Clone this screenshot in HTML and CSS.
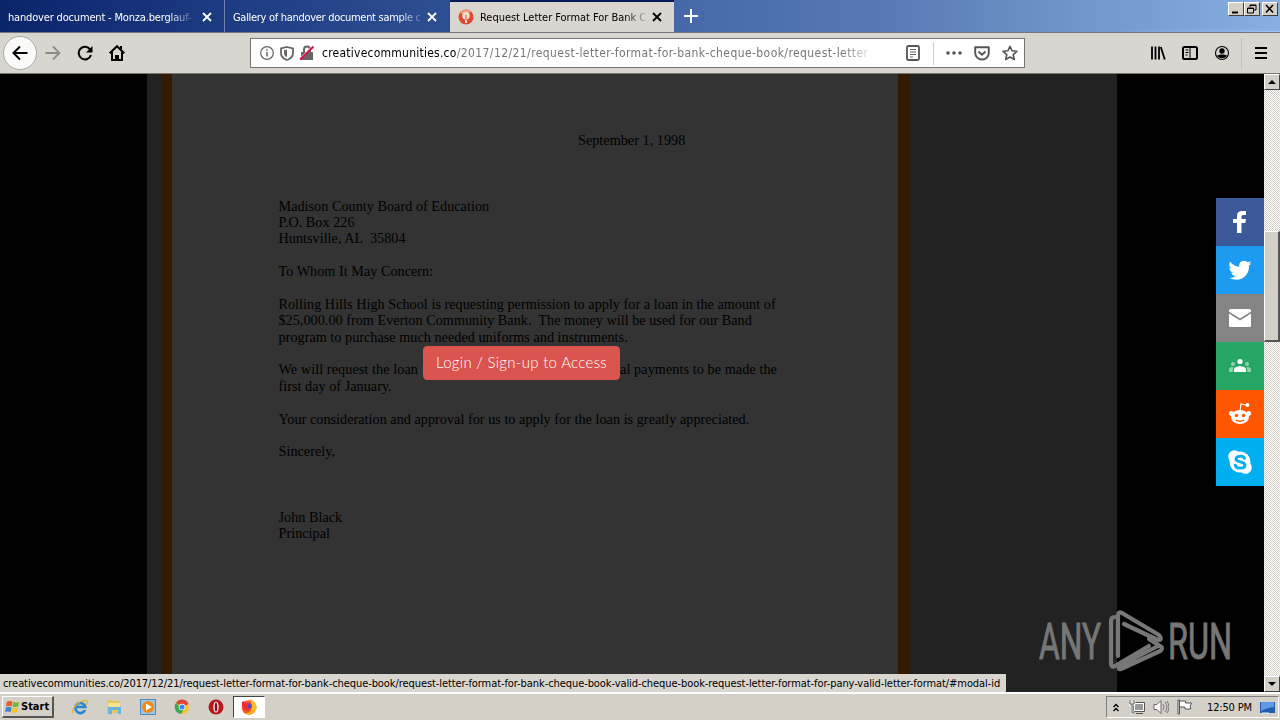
FILE: index.html
```html
<!DOCTYPE html>
<html lang="en">
<head>
<meta charset="utf-8">
<title>Request Letter Format For Bank Cheque Book</title>
<link rel="stylesheet" href="styles.css">
</head>
<body>
<header class="tabs">
  <div class="tab t1"><span class="label">handover document - Monza.berglauf-</span><svg class="x" viewBox="0 0 10 10"><path d="M1 1l8 8M9 1L1 9"/></svg></div>
  <div class="tab t2"><span class="label">Gallery of handover document sample c</span><svg class="x" viewBox="0 0 10 10"><path d="M1 1l8 8M9 1L1 9"/></svg></div>
  <div class="tab active"><svg class="favicon" viewBox="0 0 16 16"><circle cx="8" cy="8" r="7.500" fill="#de4a2c"/><path d="M2 4a7 7 0 0 1 11-1L8 6z" fill="#f3a078"/><path d="M8 3a4 4 0 0 1 3 6.500l-2 1V14H7v-3.500l-2-1A4 4 0 0 1 8 3z" fill="#f5dfd6"/><path d="M8 6v5" stroke="#de4a2c"/></svg><span class="label">Request Letter Format For Bank C</span><svg class="x" viewBox="0 0 10 10"><path d="M1 1l8 8M9 1L1 9"/></svg></div>
  <svg class="plus" viewBox="0 0 14 14"><path d="M7 0v14M0 7h14"/></svg>
  <div class="window-buttons">
    <span class="wb"><svg viewBox="0 0 12 10"><path d="M2 8.500h6" stroke-width="2"/></svg></span>
    <span class="wb"><svg viewBox="0 0 12 10"><path d="M4 3V1h6v5H8M4 1.500h6M1.500 4h6v5h-6zM1.500 4.500h6"/></svg></span>
    <span class="wb last"><svg viewBox="0 0 12 10"><path d="M2 1l7 7.500M9 1L2 8.500" stroke-width="1.600"/></svg></span>
  </div>
</header>
<nav class="toolbar">
  <div class="nav-icons">
    <span class="back"><svg viewBox="0 0 16 16"><path d="M15.500 8H1.500M8 1.500L1.500 8 8 14.500" fill="none" stroke="#000" stroke-width="2"/></svg></span>
    <svg class="i16 fwd" viewBox="0 0 16 16"><path d="M.5 8h14M8 1.500L14.500 8 8 14.500" fill="none" stroke="#8d8c88" stroke-width="1.800"/></svg>
    <svg class="i16 reload" viewBox="0 0 16 16"><path d="M13.200 4.500A6.300 6.300 0 1 0 14 10" fill="none" stroke="#000" stroke-width="2"/><path d="M15.500 1v6.500H9z"/></svg>
    <svg class="i16 home" viewBox="0 0 16 16"><path d="M.7 8.300L8 1.200l7.300 7.100" fill="none" stroke="#000" stroke-width="2"/><path d="M3 7v8h10V7" fill="none" stroke="#000" stroke-width="2"/><path d="M6 15v-5h4v5zM11 1h2v4l-2-2z"/></svg>
  </div>
  <div class="urlbar">
    <svg class="u1" viewBox="0 0 14 14"><circle cx="7" cy="7" r="6.300" fill="none" stroke="#666" stroke-width="1.200"/><path d="M7 6v4.500M7 3.200v1.600" stroke="#666" stroke-width="1.500"/></svg>
    <svg class="u2" viewBox="0 0 14 15"><path d="M7 1L13 2.500V7c0 3.500-2 5.500-6 7C3 12.500 1 10.500 1 7V2.500z" fill="none" stroke="#666" stroke-width="1.800"/><path d="M7 3.500L4 4.300V7c0 2 1 3.200 3 4.300z" fill="#666"/></svg>
    <svg class="u3" viewBox="0 0 16 16"><path d="M2 7h12v8H2z" fill="#666"/><path d="M5 7V4.500a3 3 0 0 1 6 0V7" fill="none" stroke="#666" stroke-width="2"/><path d="M1 13.500L13.500 1.500" stroke="#fff" stroke-width="1.200"/><path d="M1 14.500L14.500 1.500" stroke="#e0104c" stroke-width="2"/></svg>
    <span class="url"><b>creativecommunities.co</b><i>/2017/12/21/request-letter-format-for-bank-cheque-book/request-letter</i></span>
    <svg class="reader" viewBox="0 0 14 16"><rect x="1" y="1" width="12" height="14" rx="1.500" fill="none" stroke="#555" stroke-width="1.800"/><path d="M4 4.500h6M4 7h6M4 9.500h6M4 12h3" stroke="#666"/></svg>
    <span class="divider"></span>
    <svg class="dots" viewBox="0 0 16 6"><circle cx="2" cy="3" r="1.800"/><circle cx="8" cy="3" r="1.800"/><circle cx="14" cy="3" r="1.800"/></svg>
    <svg class="pocket" viewBox="0 0 16 15"><path d="M1.200 1.200h13.600V7A6.800 6.500 0 0 1 1.200 7z" fill="none" stroke="#555" stroke-width="1.900" stroke-linejoin="round"/><path d="M4.500 5.500L8 8.700l3.500-3.200" fill="none" stroke="#555" stroke-width="1.900"/></svg>
    <svg class="star" viewBox="0 0 16 16"><path d="M8 1.300l2 4.500 4.900.5-3.700 3.300 1.100 4.900L8 12l-4.300 2.500 1.100-4.900L1.100 6.300 6 5.800z" fill="none" stroke="#555" stroke-width="1.600" stroke-linejoin="round"/></svg>
  </div>
  <div class="right-icons">
    <svg class="i16" viewBox="0 0 16 16"><path d="M2 1.500v13M5.500 1.500v13M9 1.500v13M10.800 2l4 12.500" stroke="#000" stroke-width="1.800"/></svg>
    <svg class="i16 side" viewBox="0 0 16 16"><rect x="1" y="2" width="14" height="12" rx="1.500" fill="none" stroke="#000" stroke-width="2"/><path d="M8 2v12M3.500 5h3M3.500 7.500h3M3.500 10h2" stroke="#000"/></svg>
    <svg class="i16 acct" viewBox="0 0 16 16"><circle cx="8" cy="8" r="6.500" fill="none" stroke="#000" stroke-width="1.100"/><circle cx="8" cy="6" r="2.700"/><path d="M3 10.500c2-1.500 8-1.500 10 0-1.500 3.700-8.500 3.700-10 0z"/></svg>
    <span class="tool-divider"></span>
    <svg class="menu" viewBox="0 0 12 14"><path d="M0 2h12M0 7h12M0 12h12" stroke="#000" stroke-width="2"/></svg>
  </div>
</nav>
<main class="viewport">
  <section class="page">
    <div class="letter"><pre class="copy"><span class="date">September 1, 1998</span>



Madison County Board of Education
P.O. Box 226
Huntsville, AL  35804

To Whom It May Concern:

Rolling Hills High School is requesting permission to apply for a loan in the amount of
$25,000.00 from Everton Community Bank.  The money will be used for our Band
program to purchase much needed uniforms and instruments.

<span class="split"><span>We will request the loan </span><span>al payments to be made the</span></span>
first day of January.

Your consideration and approval for us to apply for the loan is greatly appreciated.

Sincerely,



John Black
Principal</pre></div>
  </section>
  <div class="scroll">
    <span class="arrow up"></span><span class="thumb"></span><span class="arrow down"></span>
  </div>
  <a class="login">Login / Sign-up to Access</a>
  <aside class="share">
    <span class="fb"><svg viewBox="0 0 32 32"><path fill="#fff" d="M13 27V17H9v-4h4V9.500C13 6.500 15 5 18 5h4v4h-2.500c-1.500 0-2 .7-2 2v2H22l-.7 4h-3.800v10z"/></svg></span>
    <span class="tw"><svg viewBox="0 0 32 32"><path fill="#fff" transform="translate(.5 .5)" d="M27 8.560a10 10 0 0 1-2.830.77 4.900 4.900 0 0 0 2.170-2.720 10 10 0 0 1-3.130 1.190 4.920 4.920 0 0 0-8.380 4.490A14 14 0 0 1 5.670 7.150a4.920 4.920 0 0 0 1.520 6.570 4.900 4.900 0 0 1-2.230-.61v.06a4.930 4.930 0 0 0 3.950 4.830 4.900 4.900 0 0 1-2.220.08 4.930 4.930 0 0 0 4.600 3.420A9.900 9.900 0 0 1 5 23.540a13 13 0 0 0 6.550 1.800c9.060 0 13.300-7.250 13-14.240A10 10 0 0 0 27 8.560z"/></svg></span>
    <span class="mail"><svg viewBox="0 0 32 32"><rect x="5" y="7" width="22" height="18" rx="1.500" fill="#fff"/><path d="M5 10.500l11 7 11-7" fill="none" stroke="#848484" stroke-width="1.500"/></svg></span>
    <span class="gc"><svg viewBox="0 0 32 32"><g fill="#fff"><circle cx="16" cy="11.500" r="2.600"/><path d="M10 22v-2.500c0-4.500 12-4.500 12 0V22z"/></g><g fill="#93d2b0"><circle cx="9" cy="14" r="2"/><circle cx="23" cy="14" r="2"/><path d="M5 22v-2.500c0-2 2-2.500 4.500-2.500L8.500 22zM27 22v-2.500c0-2-2-2.500-4.500-2.500l1 5z"/></g></svg></span>
    <span class="rd"><svg viewBox="0 0 32 32"><ellipse cx="16" cy="19" rx="9" ry="7" fill="#fff"/><circle cx="7.300" cy="15.500" r="2.400" fill="#fff"/><circle cx="24.700" cy="15.500" r="2.400" fill="#fff"/><path d="M16 13l1-7 5 1" fill="none" stroke="#fff" stroke-width="1.100"/><circle cx="23.500" cy="7" r="1.900" fill="#fff"/><circle cx="12.500" cy="17.500" r="1.700" fill="#ff5700"/><circle cx="19.500" cy="17.500" r="1.700" fill="#ff5700"/><path d="M12 22q4 2.500 8 0" fill="none" stroke="#ff5700" stroke-width="1.300"/></svg></span>
    <span class="sk"><svg viewBox="0 0 32 32"><circle cx="16" cy="16" r="10.500" fill="#fff"/><circle cx="10.500" cy="10.500" r="6.300" fill="#fff"/><circle cx="21.500" cy="21.500" r="6.300" fill="#fff"/><path d="M20.500 12.300c-1-2.800-8.500-2.700-8.500.7 0 3.800 9 2 9 6.200 0 3.800-8.500 4-9.800 0" fill="none" stroke="#00aff0" stroke-width="2.900" stroke-linecap="round"/></svg></span>
  </aside>
  <svg class="watermark" viewBox="0 0 200 66">
    <g font-family="Roboto, sans-serif" font-size="50.500" fill="#777" stroke="#777" stroke-width="1"><text x="4" y="51" textLength="62" lengthAdjust="spacingAndGlyphs">ANY</text><text x="133" y="51" textLength="64" lengthAdjust="spacingAndGlyphs">RUN</text></g>
    <g fill="none" stroke="#777" stroke-width="4.200" stroke-linejoin="round" stroke-linecap="round"><path d="M80 9q-4 0-4 4v42q0 5 4 3l34-20"/><path d="M83 48V8q0-5 4-3l37 22q4 5-1 5L89 16"/><path d="M114 31l11 7q4 2 0 5L86 61q-3 1-2-3l39-20"/></g>
  </svg>
  <div class="status">creativecommunities.co/2017/12/21/request-letter-format-for-bank-cheque-book/request-letter-format-for-bank-cheque-book-valid-cheque-book-request-letter-format-for-pany-valid-letter-format/#modal-id</div>
</main>
<footer class="taskbar">
  <span class="start"><svg viewBox="0 0 16 16"><path d="M2 3q3-2 6 0L7 8Q4 6.500 1 8z" fill="#e65a28"/><path d="M9 3q3 1.500 6 0l-1 5q-3 1.500-6 0z" fill="#72b735"/><path d="M1 9q3-1.500 6 0l-1 5q-3-1.500-6 0z" fill="#3f83d4"/><path d="M8 9q3 1.500 6 0l-1 5q-3 1.500-6 0z" fill="#f8c229"/></svg>Start</span>
  <div class="quick">
    <svg viewBox="0 0 16 16"><path d="M13 11a5 5 0 1 1 .3-3H4" fill="none" stroke="#2688d5" stroke-width="2.700"/><path d="M1 14C-1 9 10-1 15 2c1 1 0 3-1 4" fill="none" stroke="#e0b733" stroke-width="1.300"/></svg>
    <svg viewBox="0 0 16 16"><path d="M1 1h5l1 1h7v12H1z" fill="#e8c65d"/><path d="M2 4h12v7H2z" fill="#f6e38f"/><path d="M2 15V8h13v7h-3v-4H6v4z" fill="#68b4dc"/></svg>
    <svg viewBox="0 0 16 16"><rect x=".5" y=".5" width="15" height="15" fill="#9bc7e9" stroke="#4c8bc0"/><circle cx="8" cy="8" r="6" fill="#ef8b16"/><path d="M6 4.500l6 3.500-6 3.500z" fill="#fff"/></svg>
    <svg viewBox="0 0 16 16"><circle cx="8" cy="8" r="7" fill="#f5c52b"/><path d="M8 8L2 4a7 7 0 0 1 12.500 1z" fill="#df4436"/><path d="M2 4a7 7 0 0 0 5 11l3-5-3-1z" fill="#37a855"/><circle cx="8" cy="8" r="3.300" fill="#fff"/><circle cx="8" cy="8" r="2.600" fill="#4286e8"/></svg>
    <svg viewBox="0 0 16 16"><circle cx="8" cy="8" r="7.500" fill="#b5191c"/><ellipse cx="8" cy="8" rx="2.700" ry="5.500" fill="#eee"/><ellipse cx="8" cy="8" rx="1.300" ry="4.500" fill="#8c0e13"/></svg>
  </div>
  <span class="running"><svg viewBox="0 0 16 16"><circle cx="8" cy="8.500" r="7.300" fill="#f4582a"/><path d="M9 0c5 2 8 7 6 11-2 4-8 6-12 3 7 1 10-4 6-14z" fill="#ffbd25"/><circle cx="8" cy="7" r="2.800" fill="#5a48bd"/><path d="M1 3l2-1 2 2 3 1-2 3 3 3c-5 3-9-3-8-8z" fill="#ee2b3b"/></svg></span>
  <div class="tray">
    <svg class="chev" viewBox="0 0 6 9"><path d="M.5 4L3 1.500 5.500 4M.5 8L3 5.500 5.500 8" fill="none" stroke="#000" stroke-width="1.300"/></svg>
    <svg class="net" viewBox="0 0 16 16"><path d="M5 4h10v8H5z" fill="#999" stroke="#fff" stroke-width="2"/><path d="M4.500 3.500h11v9h-11zM7 14.500h7" fill="none" stroke="#555"/><path d="M1 1v4h4V1M3 5v9h3" fill="none" stroke="#fff" stroke-width="2.500"/><path d="M1 1v4h4V1M3 5v9h3" fill="none" stroke="#555"/></svg>
    <svg class="vol" viewBox="0 0 16 16"><path d="M1 5.500h3l4-4v13l-4-4H1z" fill="#fff" stroke="#666"/><path d="M10 5q2 3 0 6M12 3q4 5 0 10M14 2q4 6 0 12" fill="none" stroke="#777"/></svg>
    <svg class="flag" viewBox="0 0 16 16"><path d="M1 1v14h1.500V1zM2.500 2h6v2h6q-2 3-1 6H8V8H2.500z" fill="#fff" stroke="#555"/></svg>
    <span class="clock">12:50 PM</span>
    <svg class="desk" viewBox="0 0 15 13"><path d="M0 1h15v11H0z" fill="#245caf"/><path d="M1 1h13v5Q7 7 1 10z" fill="#5e9be4"/><path d="M2 12h7" stroke="#def"/></svg>
  </div>
</footer>
</body>
</html>
```

FILE: styles.css
```css
* { box-sizing: border-box; }
body { margin: 0; width: 1280px; height: 720px; overflow: hidden; display: flex; flex-direction: column; background: #000; font: 11px "DejaVu Sans Condensed", "DejaVu Sans", sans-serif; color: #000; }
svg { display: block; flex: none; }
.tabs { height: 33px; flex: none; display: flex; border-bottom: 1px solid #73767d; background: radial-gradient(ellipse at 100% 100%, #a2cdf5 0, rgba(140,184,235,.6) 60px, transparent 180px), linear-gradient(90deg, #0a246a 0, #1c3a80 210px, #2d4d91 430px, #4668a9 680px, #5878b4 880px, #7196ca 1080px, #87afe0 1280px); }
.tab { display: flex; align-items: center; height: 32px; padding: 2px 12px 0 8px; color: #fff; }
.label { flex: 1; min-width: 0; white-space: nowrap; -webkit-mask-image: linear-gradient(90deg, #000 87%, rgba(0,0,0,.15)); mask-image: linear-gradient(90deg, #000 87%, rgba(0,0,0,.15)); }
.t1 { width: 225px; border-right: 1px solid #6c81ae; letter-spacing: -.17px; }
.t2 { width: 225px; padding-right: 13px; letter-spacing: -.3px; }
.x { width: 10px; height: 10px; margin-left: 6px; fill: none; stroke: currentColor; stroke-width: 1.8; }
.t1 .x { margin-left: 9px; }
.t2 .x { margin-left: 4px; }
.active { width: 224px; background: #d9d6cf; color: #000; border-top: 2px solid #071b56; padding-top: 0; letter-spacing: -.03px; }
.favicon { width: 16px; height: 16px; margin-right: 6px; }
.plus { width: 14px; height: 14px; margin: 9px 0 0 10px; fill: none; stroke: #fff; stroke-width: 2; }
.window-buttons { display: flex; margin: 2px 2px 0 auto; }
.wb { width: 16px; height: 14px; padding: 1px; background: #d4d0c8; border: 1px solid #fff; border-right-color: #404040; border-bottom-color: #404040; }
.wb svg { width: 12px; height: 10px; fill: none; stroke: #000; }
.last { margin-left: 2px; }
.toolbar { height: 41px; flex: none; display: flex; align-items: flex-start; background: #d9d6cf; border-bottom: 1px solid #77756f; }
.nav-icons { width: 250px; height: 40px; display: flex; align-items: center; padding-left: 3px; }
.back { width: 34px; height: 34px; border: 1px solid #aaa; border-radius: 50%; background: #fafaf9; padding: 8px; }
.back svg, .i16 { width: 16px; height: 16px; }
.fwd { margin-left: 8px; }
.reload { margin-left: 16px; }
.home { margin-left: 16px; }
.urlbar { width: 775px; height: 30px; margin-top: 5px; display: flex; align-items: center; background: #fff; border: 1px solid #77756f; padding: 0 6px 0 9px; }
.u1 { width: 14px; height: 14px; }
.u2 { width: 14px; height: 15px; margin-left: 6px; }
.u3 { width: 16px; height: 16px; margin-left: 5px; }
.url { width: 548px; margin-left: 7px; white-space: nowrap; font-size: 12px; -webkit-mask-image: linear-gradient(90deg, #000 95%, rgba(0,0,0,.15)); mask-image: linear-gradient(90deg, #000 95%, rgba(0,0,0,.15)); }
.url b { font-weight: 400; letter-spacing: .24px; }
.url i { font-style: normal; color: #777; letter-spacing: .42px; }
.reader { width: 14px; height: 16px; margin-left: 36px; }
.divider { width: 1px; height: 23px; background: #ccc; margin-left: 13px; }
.dots { width: 16px; height: 6px; fill: #555; margin-left: 12px; }
.pocket { width: 16px; height: 15px; margin-left: 12px; }
.star { width: 16px; height: 16px; margin-left: 12px; }
.right-icons { display: flex; align-items: center; height: 40px; margin-left: 125px; }
.side, .acct { margin-left: 16px; }
.tool-divider { width: 1px; height: 31px; background: #c4c1bb; margin-left: 11px; }
.menu { width: 12px; height: 14px; margin-left: 13px; }
.viewport { position: relative; height: 618px; flex: none; display: flex; background: #000; }
.page { width: 970px; margin: 0 147px; padding-left: 14px; background: #222; }
.letter { width: 749px; height: 100%; border: solid #331a00; border-width: 0 12px 0 11px; background: #333; padding: 58px 0 0 106.5px; }
.copy { margin: 0; font: 14.2px/16.39px "Liberation Serif", serif; white-space: pre; color: #000; letter-spacing: .03px; }
.date { margin-left: 299.5px; }
.split { display: inline-flex; width: 498.5px; justify-content: space-between; height: 16.39px; vertical-align: top; letter-spacing: .08px; }
.scroll { width: 16px; display: flex; flex-direction: column; background: repeating-conic-gradient(#fff 0 25%, #d4d0c8 0 50%) 0 0/2px 2px; }
.arrow { width: 16px; height: 16px; background: #d4d0c8; border: 1px solid #fff; border-right-color: #404040; border-bottom-color: #404040; display: grid; place-items: center; }
.arrow::after { content: ""; border: 4px solid transparent; border-top: 0; border-bottom-color: #000; }
.down { margin-top: auto; }
.down::after { border: 4px solid transparent; border-bottom: 0; border-top-color: #000; }
.thumb { height: 111px; margin-top: 141px; background: #d4d0c8; border: 1px solid #fff; border-right: 2px solid #555; border-bottom: 2px solid #555; }
.login { position: absolute; left: 423px; top: 272px; width: 197px; height: 34px; border-radius: 4px; background: #d9534f; border: 1px solid #d9534f; color: #fff; text-align: center; font: 300 15px/31px Lato, sans-serif; letter-spacing: .3px; white-space: nowrap; }
.share { position: absolute; left: 1216px; top: 124px; width: 48px; display: flex; flex-direction: column; }
.share span { height: 48px; padding: 8px; }
.share svg { width: 32px; height: 32px; }
.fb { background: #3b5998; }
.tw { background: #1d9bf0; }
.mail { background: #848484; }
.gc { background: #25a665; }
.rd { background: #ff5700; }
.sk { background: #00aff0; }
.watermark { position: absolute; left: 1035px; top: 534px; width: 200px; height: 66px; overflow: visible; }
.status { position: absolute; left: 0; bottom: 0; width: 1006px; height: 18px; padding: 2px 0 0 3px; line-height: 16px; white-space: nowrap; background: #d9d6cf; letter-spacing: -.075px; }
.taskbar { height: 28px; flex: none; display: flex; align-items: center; background: #d4d0c8; border-top: 2px solid #fff; }
.start { width: 52px; height: 22px; margin-left: 2px; display: flex; align-items: center; gap: 1px; padding-left: 2px; border: 1px solid #fff; border-right: 2px solid #555; border-bottom: 2px solid #555; font-weight: 700; white-space: nowrap; }
.start svg { width: 15px; height: 15px; }
.quick { display: flex; gap: 18px; margin-left: 18px; }
.quick svg, .running svg { width: 16px; height: 16px; }
.running { width: 32px; height: 22px; margin-left: 9px; padding: 2px 0 0 7px; background: #fff; border: 1px solid #444; border-right-color: #fff; border-bottom-color: #fff; }
.tray { width: 173px; height: 22px; margin: 0 1px 0 auto; display: flex; align-items: center; border: 1px solid #808080; border-right-color: #fff; border-bottom-color: #fff; padding-left: 6px; }
.chev { width: 6px; height: 9px; }
.net { width: 16px; height: 16px; margin-left: 10px; }
.vol { width: 16px; height: 16px; margin-left: 8px; }
.flag { width: 16px; height: 16px; margin-left: 8px; }
.clock { width: 45px; margin-left: 14px; white-space: nowrap; letter-spacing: -.15px; }
.desk { width: 15px; height: 13px; margin-left: 8px; }
```
